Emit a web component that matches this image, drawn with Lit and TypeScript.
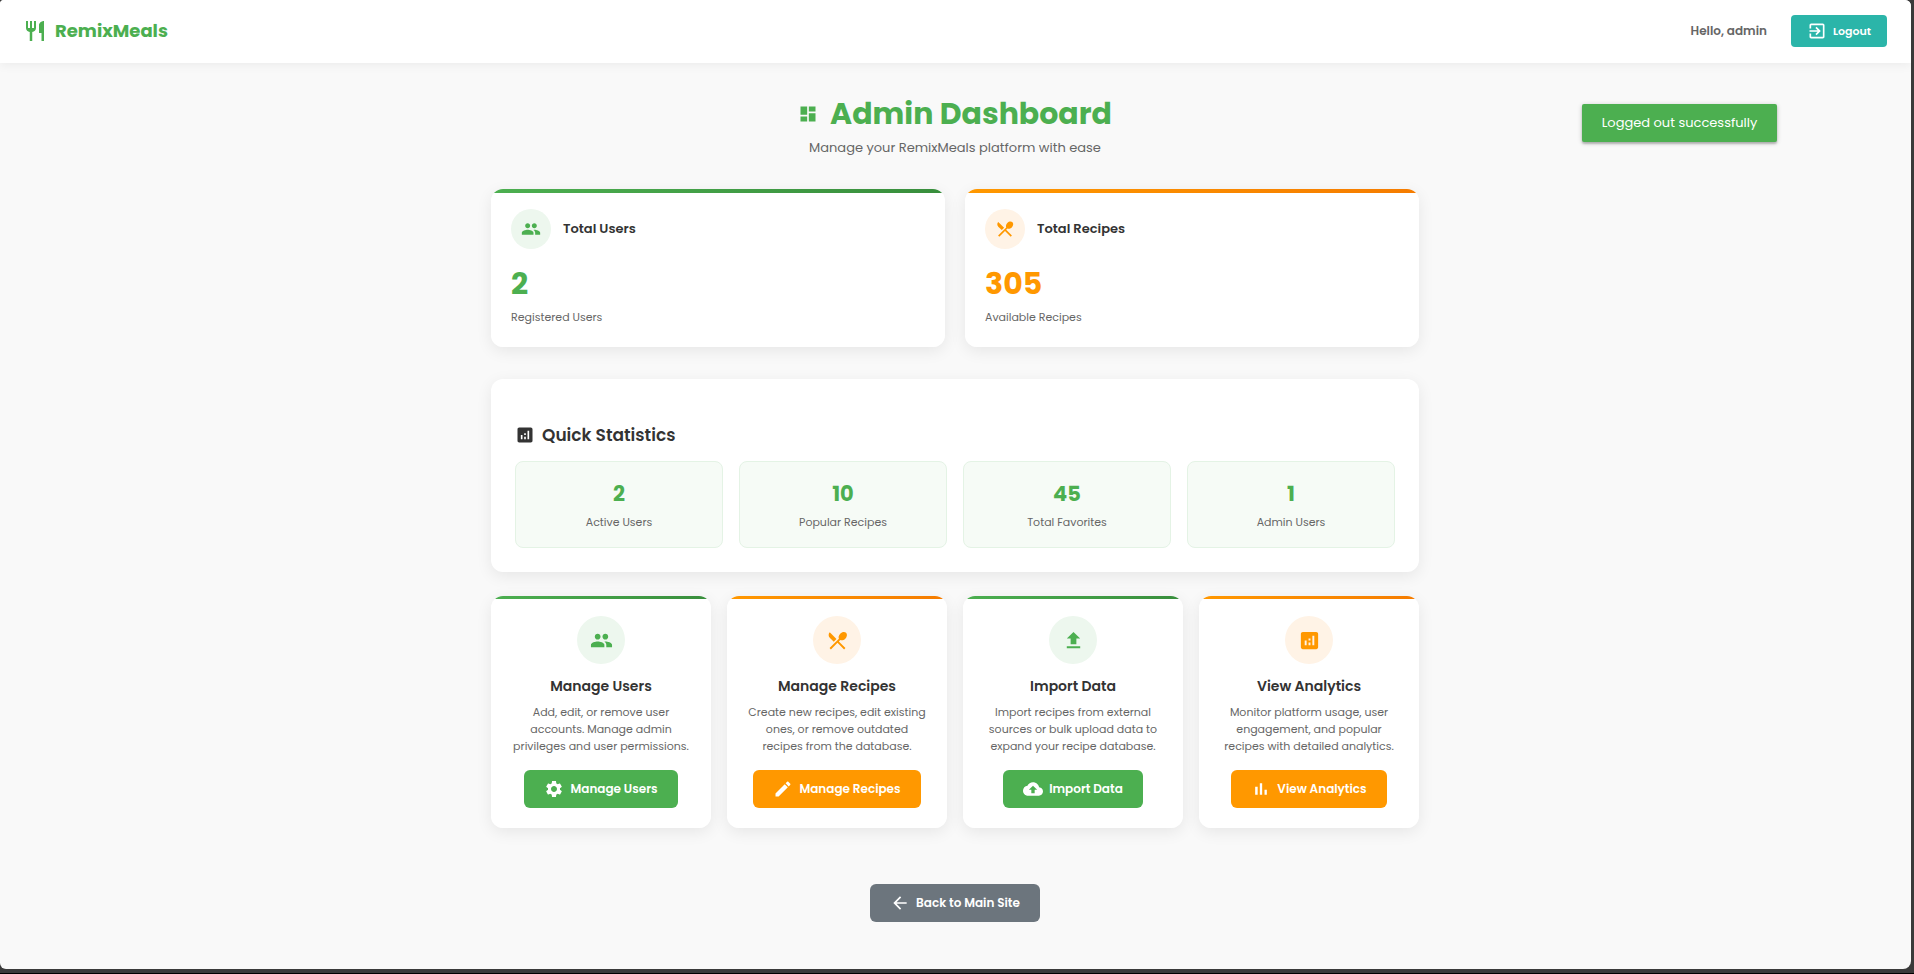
import { LitElement, html, css, svg } from "lit";
import { customElement, property } from "lit/decorators.js";
import { classMap } from "lit/directives/class-map.js";

const ICONS: Record<string, string> = {
  restaurant:
    "M11 9H9V2H7v7H5V2H3v7c0 2.12 1.66 3.84 3.75 3.97V22h2.5v-9.03C11.34 12.84 13 11.12 13 9V2h-2v7zm5-3v8h2.5v8H21V2c-2.76 0-5 2.24-5 4z",
  restaurantMenu:
    "M8.1 13.34l2.83-2.83L3.91 3.5c-1.56 1.56-1.56 4.09 0 5.66l4.19 4.18zm6.78-1.81c1.53.71 3.68.21 5.27-1.38 1.91-1.91 2.28-4.65.81-6.12-1.46-1.46-4.2-1.1-6.12.81-1.59 1.59-2.09 3.74-1.38 5.27L3.7 19.87l1.41 1.41L12 14.41l6.88 6.88 1.41-1.41L13.41 13l1.47-1.47z",
  group:
    "M16 11c1.66 0 2.99-1.34 2.99-3S17.66 5 16 5c-1.66 0-3 1.34-3 3s1.34 3 3 3zm-8 0c1.66 0 2.99-1.34 2.99-3S9.66 5 8 5C6.34 5 5 6.34 5 8s1.34 3 3 3zm0 2c-2.33 0-7 1.17-7 3.5V19h14v-2.5c0-2.33-4.67-3.5-7-3.5zm8 0c-.29 0-.62.02-.97.05 1.16.84 1.97 1.97 1.97 3.45V19h6v-2.5c0-2.33-4.67-3.5-7-3.5z",
  exit:
    "M10.09 15.59L11.5 17l5-5-5-5-1.41 1.41L12.67 11H3v2h9.67l-2.58 2.59zM19 3H5c-1.11 0-2 .9-2 2v4h2V5h14v14H5v-4H3v4c0 1.1.89 2 2 2h14c1.1 0 2-.9 2-2V5c0-1.1-.9-2-2-2z",
  dashboard: "M3 13h8V3H3v10zm0 8h8v-6H3v6zm10 0h8V11h-8v10zm0-18v6h8V3h-8z",
  analytics:
    "M19 3H5c-1.1 0-2 .9-2 2v14c0 1.1.9 2 2 2h14c1.1 0 2-.9 2-2V5c0-1.1-.9-2-2-2zM9 17H7v-5h2v5zm4 0h-2v-3h2v3zm0-5h-2v-2h2v2zm4 5h-2V7h2v10z",
  upload: "M9 16h6v-6h4l-7-7-7 7h4zm-4 2h14v2H5z",
  settings:
    "M19.14 12.94c.04-.3.06-.61.06-.94 0-.32-.02-.64-.07-.94l2.03-1.58c.18-.14.23-.41.12-.61l-1.92-3.32c-.12-.22-.37-.29-.59-.22l-2.39.96c-.5-.38-1.03-.7-1.62-.94l-.36-2.54c-.04-.24-.24-.41-.48-.41h-3.84c-.24 0-.43.17-.47.41l-.36 2.54c-.59.24-1.13.57-1.62.94l-2.39-.96c-.22-.08-.47 0-.59.22L2.74 8.87c-.12.21-.08.47.12.61l2.03 1.58c-.05.3-.09.63-.09.94s.02.64.07.94l-2.03 1.58c-.18.14-.23.41-.12.61l1.92 3.32c.12.22.37.29.59.22l2.39-.96c.5.38 1.03.7 1.62.94l.36 2.54c.05.24.24.41.48.41h3.84c.24 0 .44-.17.47-.41l.36-2.54c.59-.24 1.13-.56 1.62-.94l2.39.96c.22.08.47 0 .59-.22l1.92-3.32c.12-.22.07-.47-.12-.61l-2.01-1.58zM12 15.6c-1.98 0-3.6-1.62-3.6-3.6s1.62-3.6 3.6-3.6 3.6 1.62 3.6 3.6-1.62 3.6-3.6 3.6z",
  edit:
    "M3 17.25V21h3.75L17.81 9.94l-3.75-3.75L3 17.25zM20.71 7.04c.39-.39.39-1.02 0-1.41l-2.34-2.34c-.39-.39-1.02-.39-1.41 0l-1.83 1.83 3.75 3.75 1.83-1.83z",
  cloudUpload:
    "M19.35 10.04C18.67 6.59 15.64 4 12 4 9.11 4 6.6 5.64 5.35 8.04 2.34 8.36 0 10.91 0 14c0 3.31 2.69 6 6 6h13c2.76 0 5-2.24 5-5 0-2.64-2.05-4.78-4.65-4.96zM14 13v4h-4v-4H7l5-5 5 5h-3z",
  barChart: "M5 9.2h3V19H5zM10.6 5h2.8v14h-2.8zm5.6 8H19v6h-2.8z",
  back: "M20 11H7.83l5.59-5.59L12 4l-8 8 8 8 1.41-1.41L7.83 13H20v-2z",
};

type Tone = "green" | "orange";

@customElement("app-icon")
class AppIcon extends LitElement {
  @property() name = "";

  static styles = css`
    :host {
      display: block;
      flex: none;
      width: 20px;
      height: 20px;
    }
    svg {
      display: block;
      width: 100%;
      height: 100%;
      fill: currentColor;
    }
  `;

  render() {
    return html`<svg viewBox="0 0 24 24" aria-hidden="true">
      ${svg`<path d=${ICONS[this.name] ?? ""}></path>`}
    </svg>`;
  }
}

@customElement("app-root")
class AppRoot extends LitElement {
  private totals = [
    { icon: "group", tone: "green" as Tone, title: "Total Users", value: 2, label: "Registered Users" },
    { icon: "restaurantMenu", tone: "orange" as Tone, title: "Total Recipes", value: 305, label: "Available Recipes" },
  ];

  private quick = [
    { value: 2, label: "Active Users" },
    { value: 10, label: "Popular Recipes" },
    { value: 45, label: "Total Favorites" },
    { value: 1, label: "Admin Users" },
  ];

  private actions = [
    {
      icon: "group",
      tone: "green" as Tone,
      title: "Manage Users",
      text: "Add, edit, or remove user accounts. Manage admin privileges and user permissions.",
      buttonIcon: "settings",
    },
    {
      icon: "restaurantMenu",
      tone: "orange" as Tone,
      title: "Manage Recipes",
      text: "Create new recipes, edit existing ones, or remove outdated recipes from the database.",
      buttonIcon: "edit",
    },
    {
      icon: "upload",
      tone: "green" as Tone,
      title: "Import Data",
      text: "Import recipes from external sources or bulk upload data to expand your recipe database.",
      buttonIcon: "cloudUpload",
    },
    {
      icon: "analytics",
      tone: "orange" as Tone,
      title: "View Analytics",
      text: "Monitor platform usage, user engagement, and popular recipes with detailed analytics.",
      buttonIcon: "barChart",
    },
  ];

  static styles = css`
    :host {
      display: flex;
      flex-direction: column;
      box-sizing: border-box;
      min-height: 100vh;
      padding: 0 3px 4px 0;
      border-bottom: 1px solid #000;
      background: #3a3a3a;
      color: #333;
      font-family: Poppins, Inter, "Open Sans", sans-serif;
      font-size: 12px;
    }
    * {
      box-sizing: border-box;
    }
    h1,
    h2,
    h3,
    p {
      margin: 0;
    }
    a {
      color: inherit;
      text-decoration: none;
    }
    .page {
      position: relative;
      flex: 1;
      overflow: hidden;
      border-radius: 4px 6px 8px 6px;
      background: #f9f9f9;
    }

    .header {
      display: flex;
      align-items: center;
      justify-content: space-between;
      height: 63px;
      padding: 0 24px 1px 23px;
      background: #fff;
      box-shadow: 0 2px 10px rgba(0, 0, 0, 0.06);
    }
    .brand {
      display: flex;
      align-items: center;
      gap: 8px;
      color: #4caf50;
      font-size: 18px;
      font-weight: 700;
      line-height: 28px;
    }
    .brand app-icon {
      width: 24px;
      height: 24px;
    }
    .account {
      display: flex;
      align-items: center;
      gap: 24px;
      color: #666;
      font-size: 12px;
      font-weight: 600;
    }
    .logout {
      display: flex;
      align-items: center;
      gap: 6px;
      height: 32px;
      padding: 0 16px;
      border: 0;
      border-radius: 4px;
      background: #2bb5a9;
      color: #fff;
      font: inherit;
      font-size: 11px;
      cursor: pointer;
    }

    .toast {
      position: absolute;
      top: 104px;
      right: 7%;
      padding: 0 20px;
      border-radius: 2px;
      background: #4caf50;
      box-shadow: 0 2px 2px rgba(0, 0, 0, 0.2), 0 1px 5px rgba(0, 0, 0, 0.2);
      color: #fff;
      font-size: 13px;
      line-height: 38px;
    }

    .main {
      width: 100%;
      max-width: 977px;
      margin: 0 auto;
      padding: 29px 25px 44px 24px;
    }
    .title {
      display: flex;
      align-items: center;
      justify-content: center;
      gap: 12px;
      color: #4caf50;
      font-size: 30px;
      font-weight: 700;
      line-height: 44px;
    }
    .subtitle {
      color: #666;
      font-size: 13px;
      line-height: 24px;
      text-align: center;
    }

    .card {
      position: relative;
      overflow: hidden;
      padding: 20px;
      border-radius: 12px;
      background: #fff;
    }
    .shadow {
      border-radius: 12px;
      box-shadow: 0 4px 16px rgba(0, 0, 0, 0.08);
    }
    .card::before {
      content: "";
      position: absolute;
      inset: 0 0 auto;
      height: 4px;
      background: linear-gradient(90deg, #4caf50, #388e3c);
    }
    .card.orange::before {
      background: linear-gradient(90deg, #ff9800, #f57c00);
    }
    .circle {
      display: grid;
      place-items: center;
      width: 40px;
      height: 40px;
      border-radius: 50%;
      background: #edf7ee;
      color: #4caf50;
    }
    .orange .circle {
      background: #fff3e6;
      color: #ff9800;
    }

    .totals {
      display: grid;
      grid-template-columns: repeat(2, 1fr);
      gap: 20px;
      margin-top: 29px;
    }
    .total-head {
      display: flex;
      align-items: center;
      gap: 12px;
      margin-bottom: 12px;
    }
    .total-title {
      font-size: 13px;
      font-weight: 600;
      line-height: 20px;
    }
    .total-value {
      color: #4caf50;
      font-size: 30px;
      font-weight: 700;
      line-height: 46px;
    }
    .orange .total-value {
      color: #ff9800;
    }
    .label {
      color: #666;
      font-size: 11px;
      line-height: 20px;
    }

    .quick {
      margin-top: 32px;
      padding: 42px 24px 24px;
      background: #fff;
    }
    .quick-title {
      display: flex;
      align-items: center;
      gap: 7px;
      font-size: 17px;
      font-weight: 600;
      line-height: 28px;
    }
    .quick-grid {
      display: grid;
      grid-template-columns: repeat(4, 1fr);
      gap: 16px;
      margin-top: 12px;
    }
    .quick-item {
      display: flex;
      flex-direction: column;
      gap: 1px;
      padding: 15px;
      border: 1px solid #e4f3e5;
      border-radius: 8px;
      background: #f6fbf6;
      text-align: center;
    }
    .quick-value {
      color: #4caf50;
      font-size: 21px;
      font-weight: 700;
      line-height: 34px;
    }

    .actions {
      display: grid;
      grid-template-columns: repeat(4, 1fr);
      gap: 16px;
      margin-top: 24px;
    }
    .action {
      display: flex;
      flex-direction: column;
      align-items: center;
      height: 100%;
      text-align: center;
    }
    .action::before {
      height: 3px;
    }
    .action .circle {
      width: 48px;
      height: 48px;
    }
    .action .circle app-icon {
      width: 23px;
      height: 23px;
    }
    .action-title {
      margin-top: 10px;
      font-size: 14px;
      font-weight: 600;
      line-height: 24px;
    }
    .action-text {
      margin: 6px 0 15px;
      color: #666;
      font-size: 11px;
      line-height: 17px;
    }
    .button {
      display: inline-flex;
      align-items: center;
      gap: 6px;
      height: 38px;
      margin-top: auto;
      padding: 0 20px;
      border-radius: 6px;
      background: #4caf50;
      color: #fff;
      font-size: 12px;
      font-weight: 600;
      white-space: nowrap;
    }
    .orange .button {
      background: #ff9800;
    }
    .footer {
      display: flex;
      justify-content: center;
      margin-top: 56px;
    }
    .footer .button {
      background: #6c757d;
    }

    @media (max-width: 800px) {
      .totals {
        grid-template-columns: 1fr;
      }
      .quick-grid,
      .actions {
        grid-template-columns: repeat(2, 1fr);
      }
    }
  `;

  render() {
    return html`
      <div class="page">
        <header class="header">
          <a class="brand" href="#"><app-icon name="restaurant"></app-icon>RemixMeals</a>
          <div class="account">
            <span>Hello, admin</span>
            <button class="logout" type="button"><app-icon name="exit"></app-icon>Logout</button>
          </div>
        </header>

        <main class="main">
          <h1 class="title"><app-icon name="dashboard"></app-icon>Admin Dashboard</h1>
          <p class="subtitle">Manage your RemixMeals platform with ease</p>

          <section class="totals">
            ${this.totals.map(
              (t) => html`<div class="shadow">
                <div class=${classMap({ card: true, [t.tone]: true })}>
                  <div class="total-head">
                    <div class="circle"><app-icon name=${t.icon}></app-icon></div>
                    <h3 class="total-title">${t.title}</h3>
                  </div>
                  <p class="total-value">${t.value}</p>
                  <p class="label">${t.label}</p>
                </div>
              </div>`
            )}
          </section>

          <section class="quick shadow">
            <h2 class="quick-title"><app-icon name="analytics"></app-icon>Quick Statistics</h2>
            <div class="quick-grid">
              ${this.quick.map(
                (q) => html`<div class="quick-item">
                  <p class="quick-value">${q.value}</p>
                  <p class="label">${q.label}</p>
                </div>`
              )}
            </div>
          </section>

          <section class="actions">
            ${this.actions.map(
              (a) => html`<div class="shadow">
                <div class=${classMap({ card: true, action: true, [a.tone]: true })}>
                  <div class="circle"><app-icon name=${a.icon}></app-icon></div>
                  <h3 class="action-title">${a.title}</h3>
                  <p class="action-text">${a.text}</p>
                  <a class="button" href="#"><app-icon name=${a.buttonIcon}></app-icon>${a.title}</a>
                </div>
              </div>`
            )}
          </section>

          <div class="footer">
            <a class="button" href="#"><app-icon name="back"></app-icon>Back to Main Site</a>
          </div>
        </main>

        <div class="toast" role="status">Logged out successfully</div>
      </div>
    `;
  }
}
